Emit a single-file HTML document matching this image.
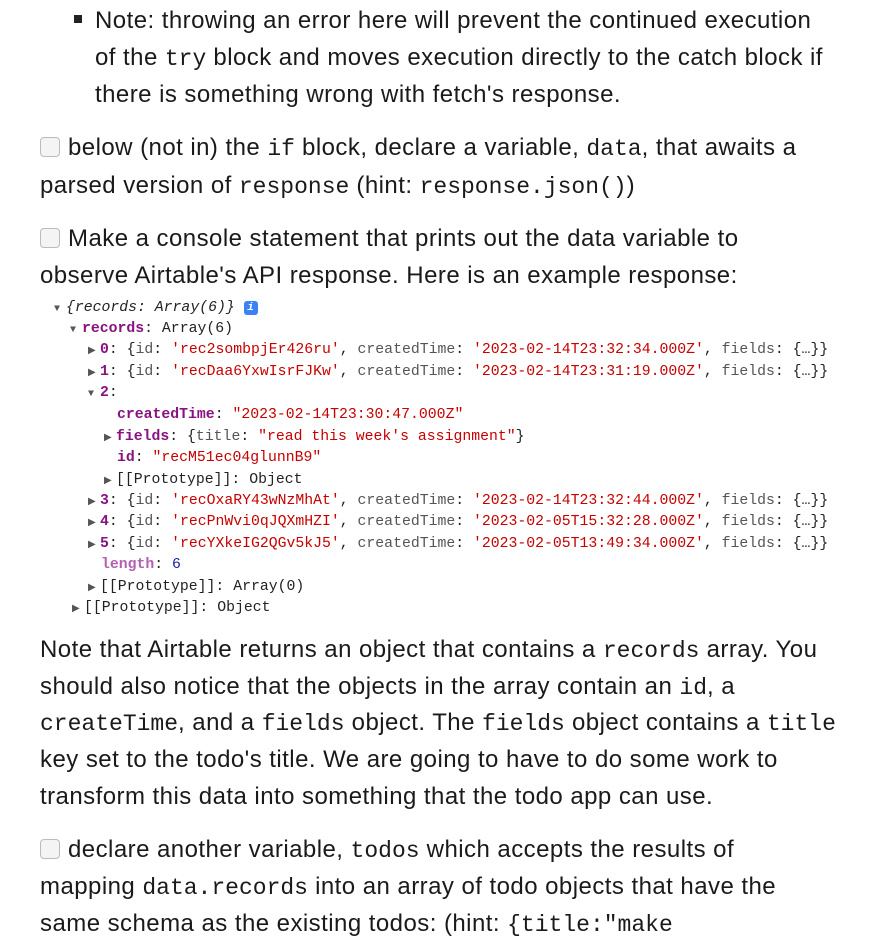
<!DOCTYPE html>
<html><head><meta charset="utf-8"><style>
body{margin:0;width:871px;height:939px;background:#fff;overflow:hidden;position:relative;font-family:"Liberation Sans",sans-serif;color:#1a1a1a}
.l{position:absolute;white-space:nowrap;font-size:24px;letter-spacing:0.45px;line-height:37px;height:37px}
code{font-family:"Liberation Mono",monospace;font-size:23px;letter-spacing:0}
.cb{display:inline-block;width:20px;height:20px;border:1.5px solid #bbb;border-radius:4px;background:#f4f4f4;vertical-align:-2px;margin-right:8px;box-sizing:border-box}
.c{position:absolute;white-space:nowrap;font-family:"Liberation Mono",monospace;font-size:14.8px;line-height:21px;color:#222}
.k{color:#881280;font-weight:bold}.s{color:#c80000}.g{color:#555}.n{color:#1a1aa6}.t{font-size:10px;color:#555;display:inline-block;width:12px}
.i{display:inline-block;width:14px;height:14px;background:#3b82f6;color:#fff;border-radius:3px;font-size:11px;text-align:center;line-height:14px;font-style:italic;font-weight:bold;vertical-align:1px}
.sq{position:absolute;left:74px;top:15px;width:8px;height:8px;background:#222}
</style></head><body>
<div class="sq"></div>
<div class="l" style="left:95px;top:2px">Note: throwing an error here will prevent the continued execution</div>
<div class="l" style="left:95px;top:39px">of the <code>try</code> block and moves execution directly to the catch block if</div>
<div class="l" style="left:95px;top:76px">there is something wrong with fetch's response.</div>
<div class="l" style="left:40px;top:129px"><span class="cb"></span>below (not in) the <code>if</code> block, declare a variable, <code>data</code>, that awaits a</div>
<div class="l" style="left:40px;top:167px">parsed version of <code>response</code> (hint: <code>response.json()</code>)</div>
<div class="l" style="left:40px;top:220px"><span class="cb"></span>Make a console statement that prints out the data variable to</div>
<div class="l" style="left:40px;top:257px">observe Airtable's API response. Here is an example response:</div>

<div class="c" style="left:54px;top:298px"><span class="t">▼</span><i>{records: Array(6)}</i> <span class="i">i</span></div>
<div class="c" style="left:70px;top:319px"><span class="t">▼</span><span class="k">records</span>: Array(6)</div>
<div class="c" style="left:88px;top:340px"><span class="t">▶</span><span class="k">0</span>: {<span class="g">id</span>: <span class="s">'rec2sombpjEr426ru'</span>, <span class="g">createdTime</span>: <span class="s">'2023-02-14T23:32:34.000Z'</span>, <span class="g">fields</span>: {…}}</div>
<div class="c" style="left:88px;top:362px"><span class="t">▶</span><span class="k">1</span>: {<span class="g">id</span>: <span class="s">'recDaa6YxwIsrFJKw'</span>, <span class="g">createdTime</span>: <span class="s">'2023-02-14T23:31:19.000Z'</span>, <span class="g">fields</span>: {…}}</div>
<div class="c" style="left:88px;top:383px"><span class="t">▼</span><span class="k">2</span>:</div>
<div class="c" style="left:117px;top:405px"><span class="k">createdTime</span>: <span class="s">"2023-02-14T23:30:47.000Z"</span></div>
<div class="c" style="left:104px;top:427px"><span class="t">▶</span><span class="k">fields</span>: {<span class="g">title</span>: <span class="s">"read this week's assignment"</span>}</div>
<div class="c" style="left:117px;top:448px"><span class="k">id</span>: <span class="s">"recM51ec04glunnB9"</span></div>
<div class="c" style="left:104px;top:470px"><span class="t">▶</span>[[Prototype]]: Object</div>
<div class="c" style="left:88px;top:491px"><span class="t">▶</span><span class="k">3</span>: {<span class="g">id</span>: <span class="s">'recOxaRY43wNzMhAt'</span>, <span class="g">createdTime</span>: <span class="s">'2023-02-14T23:32:44.000Z'</span>, <span class="g">fields</span>: {…}}</div>
<div class="c" style="left:88px;top:512px"><span class="t">▶</span><span class="k">4</span>: {<span class="g">id</span>: <span class="s">'recPnWvi0qJQXmHZI'</span>, <span class="g">createdTime</span>: <span class="s">'2023-02-05T15:32:28.000Z'</span>, <span class="g">fields</span>: {…}}</div>
<div class="c" style="left:88px;top:534px"><span class="t">▶</span><span class="k">5</span>: {<span class="g">id</span>: <span class="s">'recYXkeIG2QGv5kJ5'</span>, <span class="g">createdTime</span>: <span class="s">'2023-02-05T13:49:34.000Z'</span>, <span class="g">fields</span>: {…}}</div>
<div class="c" style="left:101px;top:555px"><span class="k" style="color:#b35fb3">length</span>: <span class="n">6</span></div>
<div class="c" style="left:88px;top:577px"><span class="t">▶</span>[[Prototype]]: Array(0)</div>
<div class="c" style="left:72px;top:598px"><span class="t">▶</span>[[Prototype]]: Object</div>

<div class="l" style="left:40px;top:631px">Note that Airtable returns an object that contains a <code>records</code> array. You</div>
<div class="l" style="left:40px;top:668px">should also notice that the objects in the array contain an <code>id</code>, a</div>
<div class="l" style="left:40px;top:704px"><code>createTime</code>, and a <code>fields</code> object. The <code>fields</code> object contains a <code>title</code></div>
<div class="l" style="left:40px;top:741px">key set to the todo's title. We are going to have to do some work to</div>
<div class="l" style="left:40px;top:778px">transform this data into something that the todo app can use.</div>
<div class="l" style="left:40px;top:831px"><span class="cb"></span>declare another variable, <code>todos</code> which accepts the results of</div>
<div class="l" style="left:40px;top:868px">mapping <code>data.records</code> into an array of todo objects that have the</div>
<div class="l" style="left:40px;top:905px">same schema as the existing todos: (hint: <code>{title:"make</code></div>
</body></html>
